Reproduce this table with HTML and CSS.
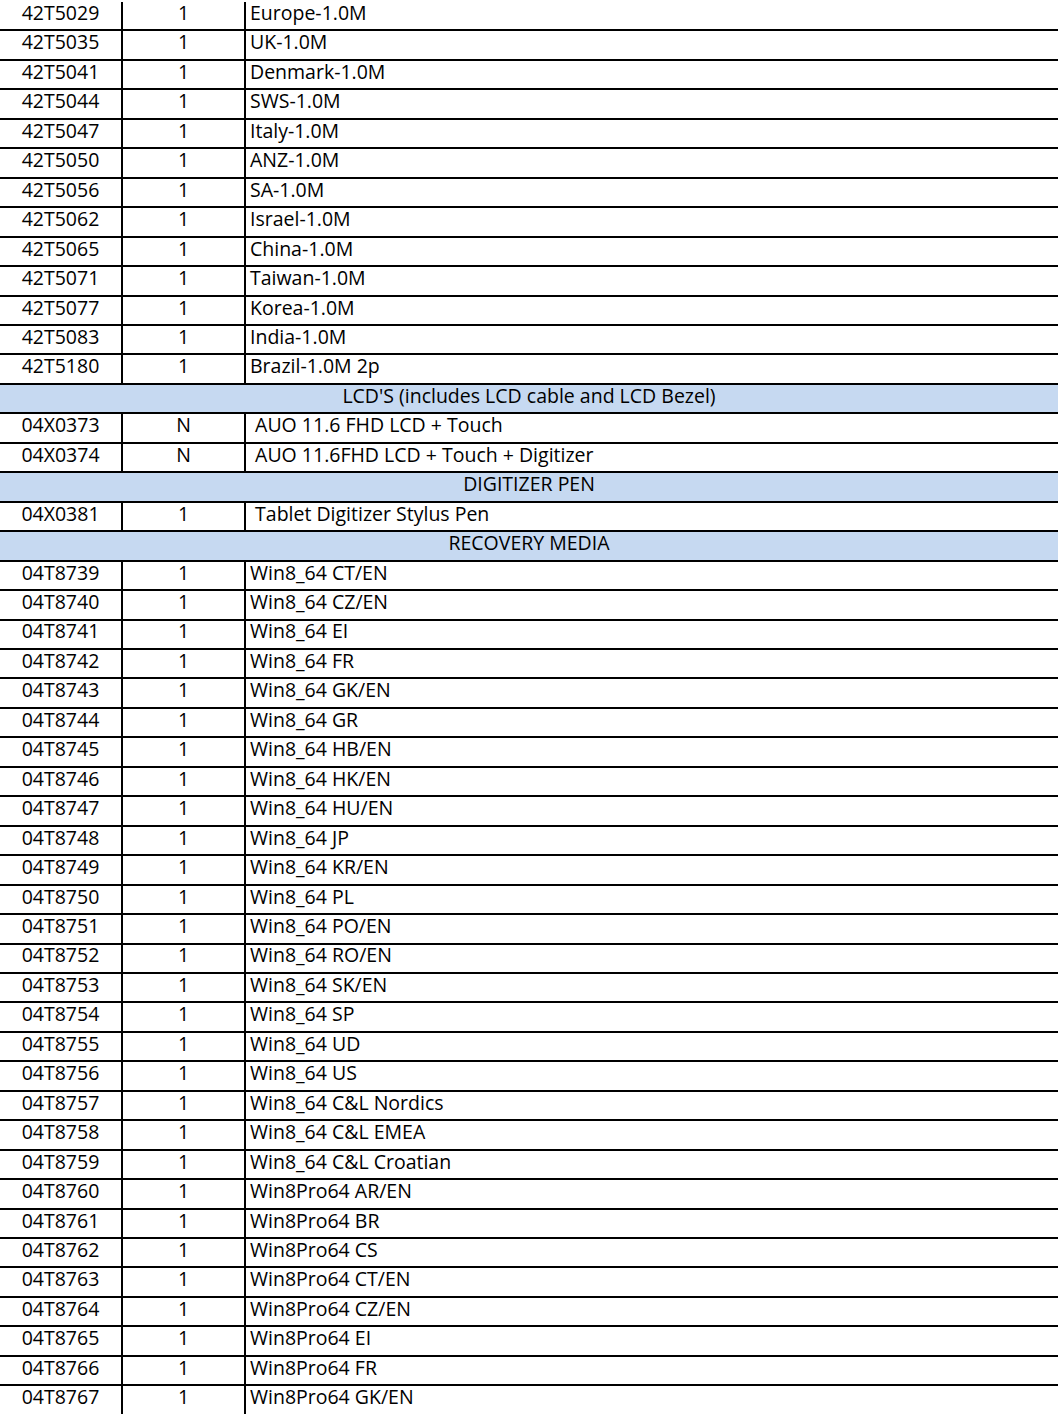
FILE: index.html
```html
<!DOCTYPE html>
<html>
<head>
<meta charset="utf-8">
<link rel="stylesheet" href="styles.css">
</head>
<body>
<div class="sheet">
  <div class="row first"><div class="c1">42T5029</div><div class="c2">1</div><div class="c3">Europe-1.0M</div></div>
  <div class="row"><div class="c1">42T5035</div><div class="c2">1</div><div class="c3">UK-1.0M</div></div>
  <div class="row"><div class="c1">42T5041</div><div class="c2">1</div><div class="c3">Denmark-1.0M</div></div>
  <div class="row"><div class="c1">42T5044</div><div class="c2">1</div><div class="c3">SWS-1.0M</div></div>
  <div class="row"><div class="c1">42T5047</div><div class="c2">1</div><div class="c3">Italy-1.0M</div></div>
  <div class="row"><div class="c1">42T5050</div><div class="c2">1</div><div class="c3">ANZ-1.0M</div></div>
  <div class="row"><div class="c1">42T5056</div><div class="c2">1</div><div class="c3">SA-1.0M</div></div>
  <div class="row"><div class="c1">42T5062</div><div class="c2">1</div><div class="c3">Israel-1.0M</div></div>
  <div class="row"><div class="c1">42T5065</div><div class="c2">1</div><div class="c3">China-1.0M</div></div>
  <div class="row"><div class="c1">42T5071</div><div class="c2">1</div><div class="c3">Taiwan-1.0M</div></div>
  <div class="row"><div class="c1">42T5077</div><div class="c2">1</div><div class="c3">Korea-1.0M</div></div>
  <div class="row"><div class="c1">42T5083</div><div class="c2">1</div><div class="c3">India-1.0M</div></div>
  <div class="row"><div class="c1">42T5180</div><div class="c2">1</div><div class="c3">Brazil-1.0M 2p</div></div>
  <div class="row section"><div class="title">LCD'S (includes LCD cable and LCD Bezel)</div></div>
  <div class="row"><div class="c1">04X0373</div><div class="c2">N</div><div class="c3"> AUO 11.6 FHD LCD + Touch</div></div>
  <div class="row"><div class="c1">04X0374</div><div class="c2">N</div><div class="c3"> AUO 11.6FHD LCD + Touch + Digitizer</div></div>
  <div class="row section"><div class="title">DIGITIZER PEN</div></div>
  <div class="row"><div class="c1">04X0381</div><div class="c2">1</div><div class="c3"> Tablet Digitizer Stylus Pen</div></div>
  <div class="row section"><div class="title">RECOVERY MEDIA</div></div>
  <div class="row"><div class="c1">04T8739</div><div class="c2">1</div><div class="c3">Win8_64 CT/EN</div></div>
  <div class="row"><div class="c1">04T8740</div><div class="c2">1</div><div class="c3">Win8_64 CZ/EN</div></div>
  <div class="row"><div class="c1">04T8741</div><div class="c2">1</div><div class="c3">Win8_64 EI</div></div>
  <div class="row"><div class="c1">04T8742</div><div class="c2">1</div><div class="c3">Win8_64 FR</div></div>
  <div class="row"><div class="c1">04T8743</div><div class="c2">1</div><div class="c3">Win8_64 GK/EN</div></div>
  <div class="row"><div class="c1">04T8744</div><div class="c2">1</div><div class="c3">Win8_64 GR</div></div>
  <div class="row"><div class="c1">04T8745</div><div class="c2">1</div><div class="c3">Win8_64 HB/EN</div></div>
  <div class="row"><div class="c1">04T8746</div><div class="c2">1</div><div class="c3">Win8_64 HK/EN</div></div>
  <div class="row"><div class="c1">04T8747</div><div class="c2">1</div><div class="c3">Win8_64 HU/EN</div></div>
  <div class="row"><div class="c1">04T8748</div><div class="c2">1</div><div class="c3">Win8_64 JP</div></div>
  <div class="row"><div class="c1">04T8749</div><div class="c2">1</div><div class="c3">Win8_64 KR/EN</div></div>
  <div class="row"><div class="c1">04T8750</div><div class="c2">1</div><div class="c3">Win8_64 PL</div></div>
  <div class="row"><div class="c1">04T8751</div><div class="c2">1</div><div class="c3">Win8_64 PO/EN</div></div>
  <div class="row"><div class="c1">04T8752</div><div class="c2">1</div><div class="c3">Win8_64 RO/EN</div></div>
  <div class="row"><div class="c1">04T8753</div><div class="c2">1</div><div class="c3">Win8_64 SK/EN</div></div>
  <div class="row"><div class="c1">04T8754</div><div class="c2">1</div><div class="c3">Win8_64 SP</div></div>
  <div class="row"><div class="c1">04T8755</div><div class="c2">1</div><div class="c3">Win8_64 UD</div></div>
  <div class="row"><div class="c1">04T8756</div><div class="c2">1</div><div class="c3">Win8_64 US</div></div>
  <div class="row"><div class="c1">04T8757</div><div class="c2">1</div><div class="c3">Win8_64 C&amp;L Nordics</div></div>
  <div class="row"><div class="c1">04T8758</div><div class="c2">1</div><div class="c3">Win8_64 C&amp;L EMEA</div></div>
  <div class="row"><div class="c1">04T8759</div><div class="c2">1</div><div class="c3">Win8_64 C&amp;L Croatian</div></div>
  <div class="row"><div class="c1">04T8760</div><div class="c2">1</div><div class="c3">Win8Pro64 AR/EN</div></div>
  <div class="row"><div class="c1">04T8761</div><div class="c2">1</div><div class="c3">Win8Pro64 BR</div></div>
  <div class="row"><div class="c1">04T8762</div><div class="c2">1</div><div class="c3">Win8Pro64 CS</div></div>
  <div class="row"><div class="c1">04T8763</div><div class="c2">1</div><div class="c3">Win8Pro64 CT/EN</div></div>
  <div class="row"><div class="c1">04T8764</div><div class="c2">1</div><div class="c3">Win8Pro64 CZ/EN</div></div>
  <div class="row"><div class="c1">04T8765</div><div class="c2">1</div><div class="c3">Win8Pro64 EI</div></div>
  <div class="row"><div class="c1">04T8766</div><div class="c2">1</div><div class="c3">Win8Pro64 FR</div></div>
  <div class="row"><div class="c1">04T8767</div><div class="c2">1</div><div class="c3">Win8Pro64 GK/EN</div></div>
</div>
</body>
</html>
```
FILE: styles.css
```css
html, body {
  margin: 0;
  padding: 0;
  background: #ffffff;
}
body {
  width: 1058px;
  height: 1414px;
  overflow: hidden;
  font-family: "Open Sans", Lato, sans-serif;
  font-size: 19.5px;
  color: #000000;
}
.sheet {
  display: flex;
  flex-direction: column;
}
.row {
  box-sizing: border-box;
  height: 29.46px;
  border-top: 2px solid #000000;
  display: grid;
  grid-template-columns: 121px 123px 1fr;
  align-items: stretch;
}
.row.first {
  border-top-color: transparent;
}
.row > div {
  display: flex;
  align-items: center;
  white-space: pre;
  line-height: 1;
  padding-bottom: 6px;
}
.c1 {
  justify-content: center;
}
.c2 {
  justify-content: center;
  border-left: 2px solid #000000;
}
.c3 {
  justify-content: flex-start;
  border-left: 2px solid #000000;
  padding-left: 4px;
}
.row.section {
  background: #c6d9f1;
  grid-template-columns: 1fr;
}
.row.section .title {
  justify-content: center;
  border-left: none;
}
```
